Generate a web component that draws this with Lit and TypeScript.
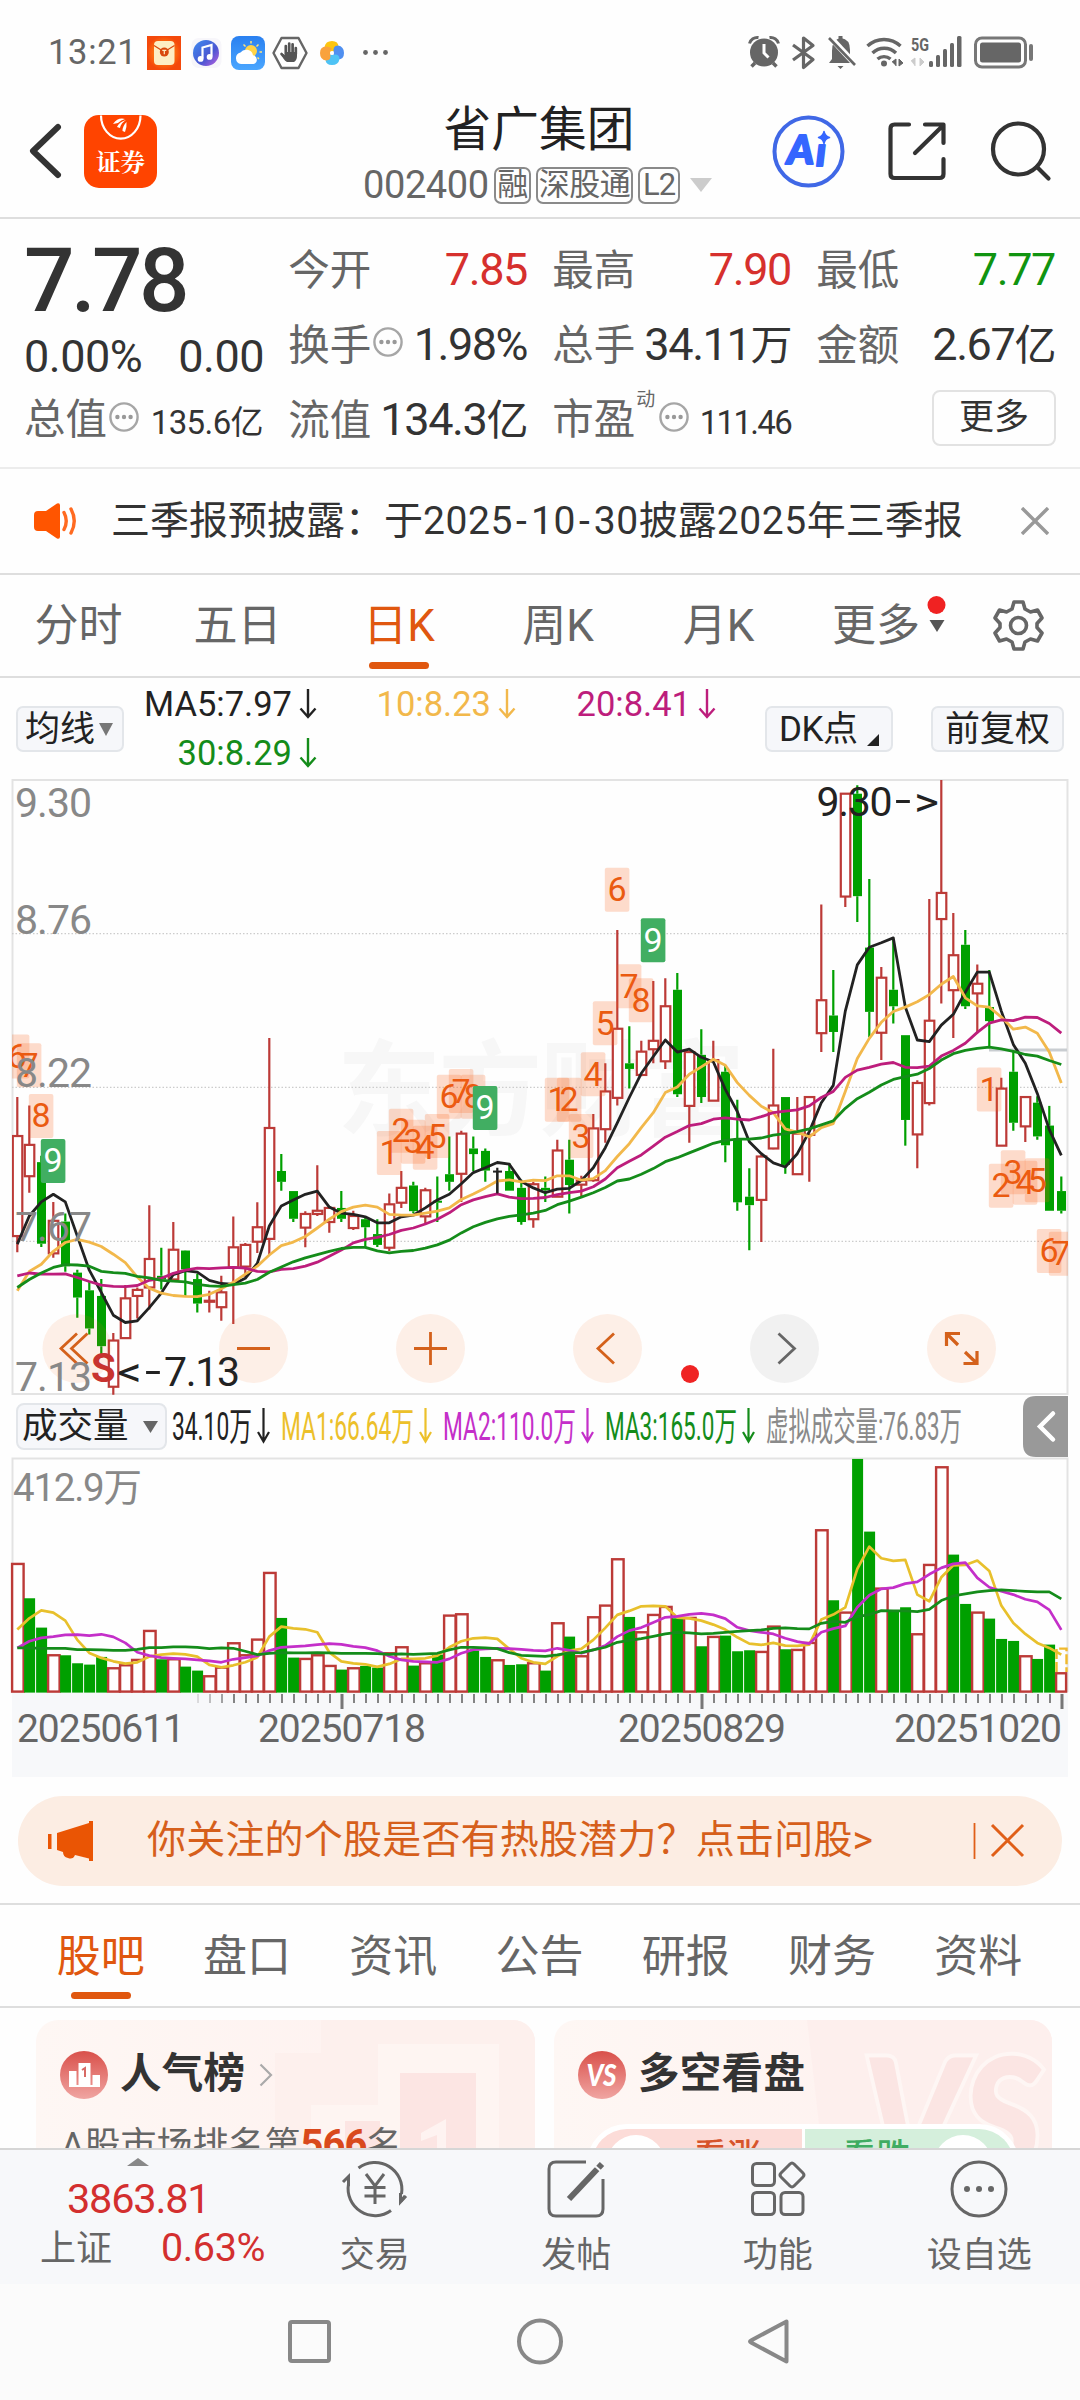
import { LitElement, html, svg, css } from "lit";
import { customElement } from "lit/decorators.js";

type Candle = [kind: string, high: number, low: number, top: number, bottom: number];

/* Horizontal layout shared by both chart panes. */
const STEP = 12;
const X0 = 17.3;
const cx = (i: number) => X0 + STEP * i;

/* Price pane: levels are recorded on a 1568-step scale over 630px. */
const PY = 630 / 1568;
const py = (v: number) => v * PY;

/* Volume pane: three steps per pixel, offset by the legend row. */
const vy = (v: number) => v / 3 - 66.4;

const CANDLES: Candle[] = [
  ["r", 814, 1200, 911, 1160], ["r", 835, 1052, 933, 1011], ["g", 960, 1187, 976, 1179], ["r", 1075, 1214, 1122, 1203],
  ["g", 1104, 1249, 1124, 1235], ["g", 1244, 1363, 1251, 1313], ["g", 1273, 1405, 1295, 1390], ["g", 1267, 1463, 1309, 1434],
  ["r", 1401, 1555, 1420, 1535], ["r", 1282, 1415, 1315, 1414], ["r", 1288, 1365, 1294, 1309], ["r", 1083, 1343, 1217, 1288],
  ["g", 1189, 1293, 1259, 1268], ["r", 1125, 1270, 1194, 1268], ["g", 1195, 1310, 1196, 1243], ["g", 1254, 1350, 1267, 1328],
  ["r", 1296, 1350, 1321, 1323], ["r", 1259, 1371, 1300, 1337], ["r", 1111, 1379, 1188, 1238], ["r", 1177, 1262, 1182, 1236],
  ["r", 1076, 1202, 1138, 1174], ["r", 667, 1208, 891, 1167], ["g", 956, 1047, 998, 1025], ["g", 1048, 1125, 1048, 1117],
  ["r", 1098, 1188, 1105, 1139], ["r", 984, 1110, 1097, 1105], ["r", 1085, 1152, 1090, 1125], ["g", 1048, 1125, 1090, 1117],
  ["r", 1097, 1145, 1110, 1140], ["g", 1115, 1187, 1118, 1138], ["g", 1118, 1187, 1155, 1182], ["r", 1054, 1197, 1081, 1189],
  ["r", 998, 1090, 1040, 1077], ["g", 1025, 1103, 1034, 1098], ["r", 1040, 1130, 1046, 1111], ["g", 1012, 1125, 1072, 1077],
  ["g", 912, 1047, 1006, 1025], ["r", 898, 1075, 905, 1005], ["g", 912, 998, 942, 956], ["g", 942, 1025, 948, 997],
  ["k", 990, 1054, 997, 999], ["g", 978, 1047, 998, 1047], ["g", 1020, 1132, 1040, 1125], ["r", 1025, 1139, 1031, 1118],
  ["g", 1012, 1075, 1040, 1046], ["r", 920, 1063, 947, 1062], ["g", 920, 1104, 970, 1033], ["r", 1010, 1060, 1022, 1032],
  ["r", 856, 1025, 892, 1021], ["r", 730, 928, 800, 894], ["r", 398, 835, 644, 816], ["g", 638, 793, 730, 744],
  ["r", 674, 762, 701, 759], ["r", 525, 730, 674, 695], ["r", 518, 744, 588, 725], ["g", 505, 814, 547, 807],
  ["r", 700, 928, 702, 836], ["g", 645, 829, 709, 814], ["r", 674, 824, 722, 823], ["g", 735, 976, 751, 934],
  ["g", 821, 1097, 920, 1076], ["g", 991, 1195, 1062, 1083], ["r", 958, 1175, 962, 1070], ["r", 694, 944, 835, 942],
  ["g", 814, 1005, 814, 983], ["r", 814, 1008, 905, 1006], ["r", 812, 1025, 814, 908], ["r", 335, 702, 573, 655],
  ["g", 498, 702, 611, 652], ["r", 57, 341, 59, 315], ["g", 38, 378, 59, 314], ["g", 271, 665, 442, 602],
  ["r", 490, 722, 517, 654], ["g", 420, 631, 547, 588], ["g", 660, 935, 660, 871], ["r", 772, 991, 779, 907],
  ["r", 321, 835, 624, 829], ["r", 25, 581, 306, 371], ["r", 356, 667, 461, 548], ["g", 398, 595, 435, 588],
  ["r", 484, 655, 532, 556], ["g", 498, 690, 590, 625], ["r", 766, 936, 793, 935], ["g", 700, 898, 751, 878],
  ["r", 812, 926, 814, 887], ["g", 812, 920, 828, 912], ["g", 836, 1097, 885, 1097], ["g", 1012, 1104, 1048, 1097],
];

const PRICE_LINES: { color: string; values: number[] }[] = [
  { color: "#222", values: [1180, 1110, 1075, 1056, 1075, 1160, 1245, 1300, 1357, 1375, 1371, 1338, 1302, 1256, 1246, 1250, 1270, 1278, 1280, 1265, 1228, 1135, 1085, 1070, 1056, 1048, 1088, 1103, 1106, 1112, 1127, 1127, 1112, 1108, 1090, 1070, 1056, 1030, 1002, 990, 977, 981, 1024, 1040, 1052, 1043, 1041, 1022, 990, 940, 878, 815, 755, 713, 672, 702, 695, 715, 726, 795, 850, 925, 955, 978, 988, 955, 900, 828, 785, 600, 485, 441, 430, 418, 590, 672, 676, 635, 608, 553, 503, 503, 600, 683, 730, 805, 895, 959] },
  { color: "#f2b84b", values: [1296, 1248, 1230, 1198, 1176, 1168, 1175, 1186, 1205, 1226, 1262, 1290, 1302, 1308, 1310, 1311, 1305, 1291, 1275, 1255, 1235, 1207, 1184, 1175, 1161, 1140, 1118, 1099, 1088, 1083, 1088, 1106, 1108, 1108, 1103, 1098, 1090, 1069, 1055, 1040, 1023, 1020, 1025, 1021, 1022, 1010, 1010, 1021, 1017, 997, 962, 930, 890, 853, 803, 789, 757, 739, 720, 735, 778, 810, 837, 853, 893, 902, 913, 890, 880, 800, 718, 668, 628, 601, 590, 577, 559, 533, 514, 567, 587, 590, 615, 645, 640, 655, 702, 779] },
  { color: "#bd1d7c", values: [1259, 1252, 1255, 1255, 1254, 1263, 1273, 1282, 1285, 1286, 1283, 1270, 1265, 1253, 1245, 1240, 1241, 1239, 1238, 1240, 1248, 1249, 1243, 1241, 1235, 1225, 1210, 1195, 1177, 1168, 1163, 1156, 1146, 1140, 1130, 1118, 1102, 1082, 1070, 1062, 1055, 1063, 1067, 1066, 1064, 1057, 1052, 1048, 1037, 1018, 990, 974, 958, 936, 914, 900, 885, 880, 869, 866, 869, 871, 863, 853, 849, 846, 836, 815, 800, 765, 747, 740, 732, 728, 740, 741, 737, 712, 698, 680, 653, 630, 622, 624, 615, 616, 631, 655] },
  { color: "#148c1a", values: [1288, 1268, 1252, 1238, 1231, 1232, 1235, 1248, 1251, 1253, 1260, 1264, 1270, 1272, 1274, 1280, 1284, 1285, 1281, 1277, 1268, 1250, 1237, 1224, 1214, 1206, 1198, 1191, 1188, 1188, 1197, 1202, 1198, 1196, 1190, 1182, 1170, 1152, 1137, 1126, 1117, 1111, 1107, 1103, 1096, 1082, 1073, 1063, 1052, 1039, 1023, 1018, 1006, 992, 975, 965, 953, 941, 929, 922, 919, 919, 916, 909, 905, 900, 893, 883, 873, 842, 818, 802, 784, 770, 763, 757, 743, 722, 706, 698, 693, 690, 694, 700, 708, 712, 723, 733] },
];

const SEQUENCE: [index: number, level: number, digit: number][] = [
  [0, 713, 6], [1, 735, 7], [2, 861, 8], [3, 973, 9],
  [31, 953, 1], [32, 898, 2], [33, 925, 3], [34, 940, 4], [35, 911, 5], [36, 813, 6], [37, 799, 7], [38, 813, 8], [39, 841, 9],
  [45, 821, 1], [46, 821, 2], [47, 911, 3], [48, 757, 4], [49, 630, 5], [50, 298, 6], [51, 538, 7], [52, 573, 8], [53, 424, 9],
  [81, 795, 1], [82, 1035, 2], [83, 1001, 3], [84, 1027, 4], [85, 1021, 5], [86, 1197, 6], [87, 1204, 7],
];

const VOLUMES: [kind: string, top: number][] = [
  ["r", 520], ["g", 623], ["g", 711], ["r", 794], ["g", 794], ["g", 818], ["g", 822], ["g", 799], ["r", 833], ["r", 824], ["r", 808],
  ["r", 721], ["g", 806], ["r", 806], ["g", 828], ["g", 840], ["r", 857], ["r", 831], ["r", 758], ["r", 794], ["r", 747], ["r", 547],
  ["g", 682], ["g", 801], ["r", 805], ["r", 794], ["r", 826], ["g", 837], ["r", 833], ["g", 826], ["g", 831], ["r", 788], ["r", 770],
  ["g", 825], ["r", 818], ["g", 792], ["r", 675], ["r", 671], ["g", 780], ["g", 799], ["r", 809], ["g", 823], ["g", 821], ["r", 818],
  ["g", 840], ["r", 698], ["g", 738], ["r", 797], ["r", 680], ["r", 645], ["r", 506], ["g", 679], ["r", 725], ["r", 673], ["r", 649],
  ["g", 683], ["r", 682], ["g", 767], ["r", 739], ["g", 735], ["g", 782], ["g", 779], ["r", 784], ["r", 708], ["g", 776], ["r", 778],
  ["r", 757], ["r", 419], ["g", 629], ["r", 666], ["g", 205], ["g", 423], ["r", 594], ["g", 664], ["g", 650], ["r", 731], ["r", 523],
  ["r", 230], ["g", 492], ["g", 640], ["r", 666], ["g", 684], ["g", 745], ["g", 751], ["r", 797], ["g", 805], ["g", 762], ["r", 848],
];

const VOLUME_LINES: { color: string; values: number[] }[] = [
  { color: "#e8c02c", values: [717, 683, 659, 666, 690, 748, 787, 802, 812, 819, 815, 798, 792, 789, 791, 798, 823, 830, 824, 815, 800, 738, 708, 713, 716, 725, 785, 812, 818, 821, 829, 820, 805, 805, 803, 795, 770, 752, 743, 741, 745, 775, 803, 815, 820, 797, 780, 775, 748, 712, 673, 661, 647, 646, 647, 681, 683, 690, 702, 717, 740, 759, 763, 757, 765, 766, 762, 687, 672, 650, 535, 468, 503, 511, 508, 612, 632, 560, 524, 523, 510, 541, 645, 697, 730, 757, 772, 792] },
  { color: "#c42fc9", values: [772, 752, 742, 738, 733, 732, 735, 731, 739, 757, 785, 795, 801, 803, 805, 808, 811, 815, 806, 801, 796, 780, 770, 768, 766, 762, 759, 761, 767, 771, 780, 797, 808, 812, 814, 815, 805, 788, 777, 775, 773, 774, 776, 779, 781, 773, 779, 788, 778, 765, 738, 720, 711, 696, 680, 677, 671, 668, 673, 684, 710, 720, 725, 730, 743, 753, 759, 725, 714, 706, 650, 614, 595, 591, 579, 574, 551, 532, 520, 516, 562, 590, 602, 612, 626, 634, 658, 718] },
  { color: "#148c1a", values: [772, 772, 773, 773, 773, 777, 777, 778, 779, 779, 776, 771, 771, 769, 769, 770, 774, 772, 773, 782, 792, 788, 786, 787, 787, 786, 787, 788, 788, 788, 789, 791, 790, 791, 790, 788, 778, 770, 770, 772, 774, 786, 794, 796, 797, 793, 787, 786, 778, 770, 755, 749, 744, 737, 730, 725, 727, 730, 728, 725, 722, 720, 718, 713, 712, 714, 715, 698, 692, 695, 678, 672, 660, 661, 661, 663, 656, 630, 616, 610, 604, 600, 598, 600, 602, 604, 604, 625] },
];

const polyline = (values: number[], y: (v: number) => number) =>
  values.map((v, i) => `${cx(i).toFixed(1)},${y(v).toFixed(1)}`).join(" ");

const downArrow = html`<svg class="arrow" width="18" height="30" viewBox="0 0 18 30" fill="none" stroke="currentColor" stroke-width="2.4"><path d="M9 0v28M1.500 19.500L9 28l7.500-8.500" /></svg>`;

const infoIcon = html`<svg class="info" width="32" height="32" viewBox="0 0 32 32"><circle cx="16" cy="16" r="13.6" fill="none" stroke="#a6a6a6" stroke-width="2.4" /><g fill="#999"><circle cx="9.400" cy="16" r="2.200" /><circle cx="16" cy="16" r="2.200" /><circle cx="22.600" cy="16" r="2.200" /></g></svg>`;

const shared = css`
  :host {
    display: block;
    font-family: Roboto, "Noto Sans CJK SC", sans-serif;
    color: #333;
  }
  * { box-sizing: border-box; }
  svg { display: block; flex: none; }
  text { font-family: Roboto, "Noto Sans CJK SC", sans-serif; }
`;

@customElement("status-bar")
class StatusBar extends LitElement {
  static styles = [shared, css`
    .bar { height: 104px; padding: 0 0 0 48px; display: flex; align-items: flex-start; }
    .time { width: 99px; padding-top: 32px; font-size: 34.500px; line-height: 40px; letter-spacing: 0.700px; color: #666; }
    .left { margin-top: 30px; }
    .right { margin: 30px 40px 0 auto; }
    .net { font-weight: 700; font-size: 19px; }
  `];
  render() {
    const petal = "M332 51q-7.500 2-7.500-4q1-6 7.500-6q6.500 0 6.500 6q0 3-2 6q-1-2-4.500-2z";
    return html`<div class="bar">
      <div class="time">13:21</div>
      <svg class="left" width="250" height="46" viewBox="147 30 250 46">
        <defs>
          <radialGradient id="env"><stop offset=".5" stop-color="#ff7a12" /><stop offset="1" stop-color="#f4490b" /></radialGradient>
          <linearGradient id="mus" x1="0" y1="0" x2="1" y2="1"><stop stop-color="#3e8df0" /><stop offset=".6" stop-color="#4a56d2" /><stop offset="1" stop-color="#c060e0" /></linearGradient>
          <linearGradient id="sky" x1="0" y1="0" x2="0" y2="1"><stop stop-color="#2a80f0" /><stop offset="1" stop-color="#4aa6ff" /></linearGradient>
        </defs>
        <rect x="147" y="36" width="34" height="34" fill="url(#env)" />
        <rect x="154" y="41" width="20.500" height="24" rx="4" fill="#fdeec4" />
        <path d="M154 45.500q4 2.500 10.300 6.500q6-4 10.200-6.500" fill="none" stroke="#d9480c" stroke-width="1.200" />
        <circle cx="164.300" cy="52" r="4.500" fill="#d9480c" />
        <path d="M162.300 50.300h4M164.300 50.300v4" stroke="#fdeec4" stroke-width="1.200" />
        <rect x="191.500" y="38" width="30" height="30" rx="7" fill="#f7f6fa" />
        <circle cx="206" cy="53" r="13" fill="url(#mus)" />
        <path d="M202.500 58.500V47.500l9-2.500v11.500" fill="none" stroke="#fff" stroke-width="2.200" />
        <circle cx="200.600" cy="58.900" r="2.900" fill="#fff" /><circle cx="209.600" cy="56.900" r="2.900" fill="#fff" />
        <rect x="231" y="36" width="34" height="34" rx="8" fill="url(#sky)" />
        <path d="M251 41v2.500M243.500 44.500l2 2M258.500 44.500l-2 2M262 52h-2.500M259 59l-1.500-1.500" stroke="#ffe27a" stroke-width="1.500" />
        <circle cx="251" cy="51" r="6" fill="#ffd447" />
        <path d="M241 64a5.800 5.800 0 01-.5-11.400a7 7 0 0112.500 2.600a4.500 4.500 0 01.5 8.800z" fill="#fff" />
        <path d="M281.500 38h17l8 15l-8 15h-17l-8-15z" fill="#fff" stroke="#666" stroke-width="2.400" stroke-linejoin="round" />
        <g fill="none" stroke="#555" stroke-width="2.700" stroke-linecap="round"><path d="M285.800 54v-8M289.200 53v-9.500M292.600 53v-8.700M295.800 54v-6M281.500 54l2.500 3" /></g>
        <path d="M281.500 53l3.500 2v-3h12v4q0 4-3 6h-7q-4-2-5.500-9z" fill="#555" />
        <path d=${petal} fill="#fdc510" />
        <path d=${petal} fill="#4f8ff0" transform="rotate(90 332 53)" />
        <path d=${petal} fill="#4ec3f5" transform="rotate(180 332 53)" />
        <path d=${petal} fill="#f9a23c" transform="rotate(270 332 53)" />
        <g fill="#666"><circle cx="365.500" cy="52.500" r="2.400" /><circle cx="375.500" cy="52.500" r="2.400" /><circle cx="385.500" cy="52.500" r="2.400" /></g>
      </svg>
      <svg class="right" width="300" height="46" viewBox="740 30 300 46">
        <g fill="#666">
          <circle cx="764" cy="52.500" r="14" />
          <path d="M749.500 43.500a8 8 0 019-6M778.500 43.500a8 8 0 00-9-6" fill="none" stroke="#666" stroke-width="3" />
          <path d="M755 63l-3.500 3.500M773 63l3.500 3.500" stroke="#666" stroke-width="3.500" />
          <path d="M764 44v9l4.500 4.500" fill="none" stroke="#fff" stroke-width="3" />
        </g>
        <path d="M793 45l20 14.500l-9.500 8V38l9.500 7.500L793 60" fill="none" stroke="#666" stroke-width="3.200" stroke-linejoin="round" />
        <path d="M829 63l3-4V51q0-12 9-13q9 1 9 12v8l4 5z" fill="#666" />
        <path d="M837.500 66h6l-3 3zM838.500 36h4v3h-4z" fill="#666" />
        <path d="M829 36l26 28" stroke="#fff" stroke-width="6" /><path d="M829 38l26 27" stroke="#666" stroke-width="2.600" />
        <g fill="none" stroke="#666" stroke-width="3.400"><path d="M867.500 46a24 24 0 0133 0M872.500 53a17 17 0 0123.500 0M877.500 59a10 10 0 0113 0" /></g>
        <circle cx="884" cy="63.500" r="3" fill="#666" />
        <path d="M892 62l4-3v7M899 59v7l4-3z" fill="#666" stroke="#666" />
        <text class="net" x="911" y="50.500" fill="#666" textLength="18" lengthAdjust="spacingAndGlyphs">5G</text>
        <path d="M911 61l4-3v8M920 58v8l4-4z" fill="#ccc" stroke="#ccc" />
        <g fill="#666"><rect x="929" y="61" width="4" height="6" rx="1.500" /><rect x="936" y="55" width="4" height="12" rx="1.500" /><rect x="943" y="49" width="4" height="18" rx="1.500" /><rect x="950" y="43" width="4" height="24" rx="1.500" /><rect x="957" y="36" width="4.500" height="31" rx="1.500" /></g>
        <rect x="975.500" y="38" width="50" height="29" rx="6.500" fill="none" stroke="#777" stroke-width="3" />
        <rect x="980" y="42.500" width="41" height="20" rx="2.500" fill="#666" />
        <rect x="1029" y="44" width="4" height="17" rx="2" fill="#777" />
      </svg>
    </div>`;
  }
}

@customElement("stock-header")
class StockHeader extends LitElement {
  static styles = [shared, css`
    .bar { height: 115px; border-bottom: 2px solid #dedede; display: grid; grid-template-columns: 340px 400px 340px; }
    .title { text-align: center; font-size: 47.700px; line-height: 52px; color: #222; margin-left: -2px; }
    .code { display: flex; align-items: center; height: 38px; margin-top: 10px; padding-left: 23px; font-size: 38px; letter-spacing: -0.400px; color: #666; line-height: 38px; }
    .code .num { width: 131px; }
    .tag { height: 37px; border: 2px solid #8a8a8a; border-radius: 7px; font-size: 31px; line-height: 32px; letter-spacing: -0.5px; margin-right: 5px; white-space: nowrap; display: flex; justify-content: center; }
    .tag-1 { width: 37px; }
    .tag-3 { width: 97px; }
    .tag-2 { width: 42px; letter-spacing: -1px; }
    .drop { margin-left: 5px; }
    .brand { font-family: "Noto Serif CJK SC", "Noto Sans CJK SC", serif; font-weight: 700; font-size: 24px; }
    .ai { font-family: Lato, sans-serif; font-weight: 900; font-style: italic; font-size: 40px; }
  `];
  render() {
    return html`<div class="bar">
      <svg width="340" height="113" viewBox="0 104 340 113">
        <path d="M58 127L33 151l25 24" fill="none" stroke="#333" stroke-width="6" stroke-linecap="round" stroke-linejoin="round" />
        <rect x="84" y="115" width="73" height="73" rx="15" fill="#ff4400" />
        <path d="M101 115.500a19.600 23 0 0039.500 0" fill="none" stroke="#fff" stroke-width="2.200" />
        <path d="M125 119q-7-2-12 5l5-1q3-3 7-4zM126 120q-7 2-9 7l3 1q1-5 6-8zM126.500 122q-4 4-4 9l2.500 1q2-5 1.500-10z" fill="#fff" />
        <text class="brand" x="96" y="171" fill="#fff" textLength="49" lengthAdjust="spacingAndGlyphs">证券</text>
      </svg>
      <div>
        <div class="title">省广集团</div>
        <div class="code"><span class="num">002400</span><span class="tag tag-1">融</span><span class="tag tag-3">深股通</span><span class="tag tag-2">L2</span>
          <svg class="drop" width="22" height="14" viewBox="0 0 22 14"><path d="M0 0h22L11 14z" fill="#ccc" /></svg></div>
      </div>
      <svg width="340" height="113" viewBox="740 104 340 113" fill="none" stroke="#333" stroke-width="4.200" stroke-linecap="round" stroke-linejoin="round">
        <circle cx="808.500" cy="151.500" r="34" stroke="#4068e6" stroke-width="4" />
        <text class="ai" x="787" y="164" fill="#3566ff" stroke="#3566ff" stroke-width="2"><tspan textLength="27" lengthAdjust="spacingAndGlyphs">A</tspan><tspan x="816" y="165.500">ı</tspan></text>
        <path d="M824 131.500q1 5 5.500 6q-4.500 1-5.500 6q-1-5-5.500-6q4.500-1 5.500-6z" fill="#3566ff" stroke="#3566ff" stroke-width="1.500" />
        <path d="M909 124.500h-14.500q-4 0-4 4v45.500q0 4 4 4h45q4 0 4-4V159M925 124.500h18.500v18.500M943 125.500L915 153" />
        <circle cx="1018.500" cy="149" r="25.500" /><path d="M1037 167l11.500 11.500" />
      </svg>
    </div>`;
  }
}

@customElement("quote-panel")
class QuotePanel extends LitElement {
  static styles = [shared, css`
    .panel { height: 250px; padding: 12.500px 0 0 26px; display: grid; grid-template-columns: 236px 237px 237px 237px; grid-template-rows: repeat(3, 75.200px); column-gap: 27px; border-bottom: 2px solid #ececec; }
    .main { grid-row: 1 / 3; margin-left: -2px; padding-top: 1px; }
    .price { font-weight: 500; font-size: 89px; line-height: 96px; letter-spacing: -3.600px; color: #333; }
    .change { display: flex; justify-content: space-between; font-size: 45px; line-height: 60px; letter-spacing: -0.500px; margin: -2px -2px 0 0; }
    .cell { display: flex; align-items: baseline; line-height: 75px; white-space: nowrap; }
    .name { font-size: 41.500px; color: #666; margin-left: -0.800px; }
    .value { margin-left: auto; font-size: 45px; letter-spacing: -1.400px; margin-right: -1px; }
    .value .cjk { font-size: 42px; }
    .pct { letter-spacing: -1.500px; }
    .small { font-size: 33px; letter-spacing: -0.600px; }
    .small .cjk { font-size: 33px; }
    .ratio { letter-spacing: -1.700px; }
    .up { color: #d6302d; }
    .down { color: #109410; }
    .info { align-self: center; margin-left: 1px; margin-top: -4px; }
    .main ~ .cell:nth-of-type(8) .name { margin-left: -2px; }
    .sup { font-size: 19px; color: #666; align-self: flex-start; line-height: 24px; margin-top: 6px; width: 21px; margin-left: 1px; }
    .more { justify-self: end; margin-top: 8px; margin-right: -2px; width: 124px; height: 56px; border: 2px solid #e2e2e2; border-radius: 8px; font-size: 35px; line-height: 51px; text-align: center; color: #333; }
  `];
  render() {
    const cell = (name: string, value: string, unit = "", tone = "") =>
      html`<div class="cell"><span class="name">${name}</span><span class="value ${tone}">${value}<span class="cjk">${unit}</span></span></div>`;
    return html`<div class="panel">
      <div class="main"><div class="price">7.78</div><div class="change"><span>0.00%</span><span>0.00</span></div></div>
      ${cell("今开", "7.85", "", "up")} ${cell("最高", "7.90", "", "up")} ${cell("最低", "7.77", "", "down")}
      <div class="cell"><span class="name">换手</span>${infoIcon}<span class="value pct">1.98%</span></div>
      ${cell("总手", "34.11", "万")} ${cell("金额", "2.67", "亿")}
      <div class="cell"><span class="name">总值</span>${infoIcon}<span class="value small">135.6<span class="cjk">亿</span></span></div>
      ${cell("流值", "134.3", "亿")}
      <div class="cell"><span class="name">市盈</span><span class="sup">动</span>${infoIcon}<span class="value small ratio">111.46</span></div>
      <div class="more">更多</div>
    </div>`;
  }
}

@customElement("notice-bar")
class NoticeBar extends LitElement {
  static styles = [shared, css`
    .bar { height: 106px; padding: 0 31px 0 34px; display: flex; align-items: center; border-bottom: 2px solid #dedede; }
    .text { margin-left: 33px; font-size: 39px; letter-spacing: 0; line-height: 60px; white-space: nowrap; }
    .date { letter-spacing: 0.600px; }
    .dash { letter-spacing: 4px; padding-left: 3px; }
    .close { margin-left: auto; }
  `];
  render() {
    const dash = html`<span class="dash">-</span>`;
    return html`<div class="bar">
      <svg width="44" height="38" viewBox="0 0 44 38"><path d="M4 9h8L23 1.500q3-1 3 2v31q0 3-3 2L12 29H4q-4 0-4-4V13q0-4 4-4z" fill="#ff5500" /><path d="M30 10.500q4.500 8.500 0 17M37 7q6.500 12 0 24" fill="none" stroke="#ff6a20" stroke-width="3.400" stroke-linecap="round" /></svg>
      <span class="text">三季报预披露：于<span class="date">2025${dash}10${dash}30</span>披露<span class="date">2025</span>年三季报</span>
      <svg class="close" width="28" height="28" viewBox="0 0 28 28"><path d="M1 1l26 26M27 1L1 27" stroke="#999" stroke-width="3.400" /></svg>
    </div>`;
  }
}

@customElement("period-tabs")
class PeriodTabs extends LitElement {
  static styles = [shared, css`
    .bar { height: 103px; border-bottom: 2px solid #dedede; display: grid; grid-template-columns: 157px 161px 162px 156px 165px 278px; }
    .tab { display: flex; flex-direction: column; align-items: center; padding-top: 18px; font-size: 44px; line-height: 66px; color: #666; }
    .active { color: #e0570f; }
    .mark { width: 60px; height: 7px; border-radius: 4px; background: #e0570f; margin-top: 3px; }
    .more { display: flex; color: #666; }
    .more .label { width: 95px; padding: 18px 0 0 31px; font-size: 44px; line-height: 66px; white-space: nowrap; }
  `];
  render() {
    return html`<div class="bar">
      ${["分时", "五日", "日K", "周K", "月K"].map((t) => t === "日K"
        ? html`<div class="tab active">${t}<div class="mark"></div></div>`
        : html`<div class="tab">${t}</div>`)}
      <div class="more"><span class="label">更多</span>
        <svg width="160" height="101" viewBox="896 575 160 101">
          <circle cx="936.500" cy="605" r="9" fill="#f02222" /><path d="M929.500 620h15l-7.500 12z" fill="#555" />
          <path d="M1014 602h9l2 7l5.500 3l7-2l4.500 8l-5 5.500v4l5 5.500l-4.500 8l-7-2l-5.500 3l-2 7h-9l-2-7l-5.500-3l-7 2l-4.500-8l5-5.500v-4l-5-5.500l4.500-8l7 2l5.500-3z" fill="none" stroke="#666" stroke-width="3.600" stroke-linejoin="round" />
          <circle cx="1018.500" cy="625.500" r="8" fill="none" stroke="#666" stroke-width="3.600" />
        </svg>
      </div>
    </div>`;
  }
}

@customElement("average-legend")
class AverageLegend extends LitElement {
  static styles = [shared, css`
    .bar { height: 101px; padding: 0 16px 0 16px; display: flex; align-items: flex-start; }
    .chip { margin-top: 28px; height: 46px; border: 2px solid #e3e6ea; border-radius: 7px; background: #f6f7fa; color: #222; font-size: 35px; line-height: 41px; display: flex; align-items: center; white-space: nowrap; }
    .line { width: 108px; padding-left: 7px; gap: 4px; }
    .dk { width: 128px; padding-left: 12px; margin-left: auto; letter-spacing: -0.500px; }
    .dk svg { align-self: flex-end; margin: 0 0 4px 10px; }
    .right { width: 133px; margin-left: 38px; justify-content: center; }
    .values { display: grid; grid-template-columns: 193px 199px 200px; grid-template-rows: 48.500px 48.500px; padding-top: 2px; }
    .value { display: flex; justify-content: flex-end; align-items: center; gap: 7px; font-size: 34.500px; line-height: 48px; }
    .m5 { color: #222; }
    .m10 { color: #f2b84b; }
    .m20 { color: #bd1d7c; }
    .m30 { color: #148c1a; }
  `];
  render() {
    return html`<div class="bar">
      <div class="chip line">均线<svg width="14" height="13" viewBox="0 0 14 13"><path d="M0 0h14L7 13z" fill="#777" /></svg></div>
      <div class="values">
        <span class="value m5">MA5:7.97${downArrow}</span><span class="value m10">10:8.23${downArrow}</span><span class="value m20">20:8.41${downArrow}</span>
        <span class="value m30">30:8.29${downArrow}</span>
      </div>
      <div class="chip dk">DK点<svg width="12" height="12" viewBox="0 0 12 12"><path d="M12 0v12H0z" fill="#222" /></svg></div>
      <div class="chip right">前复权</div>
    </div>`;
  }
}

@customElement("price-chart")
class PriceChart extends LitElement {
  static styles = [shared, css`
    .axis { font-size: 41px; fill: #888; }
    .note { font-size: 41px; fill: #222; }
    .sell { font-size: 40px; font-weight: 700; fill: #c8332f; }
    .digit { font-size: 34px; text-anchor: middle; }
    .water { font-size: 104px; font-weight: 700; fill: #f7f7f7; }
  `];
  private candle([kind, high, low, top, bottom]: Candle, i: number) {
    const x = cx(i);
    const t = py(top), b = py(bottom);
    const color = kind === "r" ? "#bc3a37" : kind === "g" ? "#00a000" : "#222";
    const wicks = svg`<path d="M${x} ${py(high)}V${t}M${x} ${b}V${py(low)}" stroke=${color} stroke-width="2.200"/>`;
    return kind === "r"
      ? svg`${wicks}<rect x=${x - 4.5} y=${t} width="9.500" height=${Math.max(b - t, 1)} fill="#fff" stroke=${color} stroke-width="2.200"/>`
      : svg`${wicks}<rect x=${x - 4.3} y=${t} width="9" height=${Math.max(b - t, 2)} fill=${color}/>`;
  }
  private badge([i, level, digit]: [number, number, number]) {
    const x = cx(i) - 0.2, y = py(level), nine = digit === 9;
    return svg`<rect x=${x - 12.3} y=${y - 22} width="24.600" height="44" rx="2" fill=${nine ? "#41ae62" : "#fa5f16"} fill-opacity=${nine ? 1 : 0.22}/>
      <text class="digit" x=${x} y=${y + 11.5} fill=${nine ? "#fff" : "#ea5a10"}>${digit}</text>`;
  }
  render() {
    const centers = [77, 253.5, 430.5, 607.5, 784.5, 961.5];
    const labels: [string, number][] = [["9.30", 118], ["8.76", 407], ["8.22", 790], ["7.67", 1172], ["7.13", 1545]];
    return html`<svg width="1080" height="616" viewBox="0 9 1080 616">
      <defs><clipPath id="pane"><rect x="12" y="9" width="1056" height="616" /></clipPath></defs>
      <text class="water" x="337" y="358" textLength="408">东方财富</text>
      <rect x="12.500" y="10" width="1055" height="614" fill="none" stroke="#e3e3e3" stroke-width="2" />
      ${[407, 790, 1173].map((v) => svg`<path d="M12 ${py(v)}H1068" stroke="#ccc" stroke-width="1.200" stroke-dasharray="1.500 2"/>`)}
      <path d="M989 280H1067" stroke="#c9cdd1" stroke-width="3" />
      <g clip-path="url(#pane)">
        ${CANDLES.map((c, i) => this.candle(c, i))}
        ${PRICE_LINES.map((l) => svg`<polyline points=${polyline(l.values, py)} fill="none" stroke=${l.color} stroke-width="2.800" stroke-linejoin="round"/>`)}
        <path d="M${cx(40)} ${py(996)}V${py(1054)}" stroke="#222" stroke-width="2.200" />
        ${SEQUENCE.map((b) => this.badge(b))}
      </g>
      ${centers.map((x, i) => svg`<circle cx=${x} cy="578.500" r="34.500" fill=${i === 4 ? "#555" : "#f5681a"} fill-opacity=${i === 4 ? 0.08 : 0.1}/>`)}
      <g fill="none" stroke="#d4611b" stroke-width="2.800">
        <path d="M77 563.500L61 578.500l16 15M87.500 563.500L71.500 578.500l16 15" />
        <path d="M237 578.500h33" /><path d="M414 578.500h33M430.500 562v33" />
        <path d="M614 563.500L598 578.500l16 15" /><path d="M778.500 563.500l16 15l-16 15" stroke="#666" />
        <path d="M946.500 576V563.500H960M947 564l11 11M977 581v12.500h-13.500M976.500 593l-11.500-11" stroke-width="3.200" />
      </g>
      ${labels.map(([t, v]) => svg`<text class="axis" x="15" y=${py(v)} textLength="77">${t}</text>`)}
      <text class="note" x="816.500" y="45.500" textLength="76">9.30</text>
      <text class="note" x="895" y="44" textLength="16" lengthAdjust="spacingAndGlyphs">-</text>
      <text class="note" x="914" y="45.500" textLength="25" lengthAdjust="spacingAndGlyphs">&gt;</text>
      <text class="sell" x="91" y="612" textLength="23">S</text>
      <text class="note" x="117" y="615.500" textLength="25" lengthAdjust="spacingAndGlyphs">&lt;</text>
      <text class="note" x="145" y="614.500" textLength="16" lengthAdjust="spacingAndGlyphs">-</text>
      <text class="note" x="164" y="615.500" textLength="76">7.13</text>
      <circle cx="690" cy="604" r="9" fill="#ef2323" />
    </svg>`;
  }
}

@customElement("volume-legend")
class VolumeLegend extends LitElement {
  static styles = [shared, css`
    .bar { height: 62px; padding: 0 12px 0 16px; display: flex; align-items: flex-start; }
    .chip { margin-top: 8px; width: 151px; height: 47px; border: 2px solid #e3e6ea; border-radius: 8px; background: #f6f7fa; color: #222; font-size: 35.500px; line-height: 41px; display: flex; align-items: center; justify-content: space-between; padding: 0 7px 0 4px; }
    .items { display: flex; gap: 11px; padding-left: 5px; }
    .item { display: flex; align-items: flex-start; }
    .item .arrow { margin: 13px 0 0 5px; }
    .item text { font-size: 39px; fill: currentColor; }
    .fold { margin-left: auto; }
  `];
  render() {
    const items: [string, number, string][] = [["34.10万", 80, "#222"], ["MA1:66.64万", 133, "#ecc02a"], ["MA2:110.0万", 133, "#c42fc9"], ["MA3:165.0万", 132, "#148c1a"], ["虚拟成交量:76.83万", 196, "#8a8a8a"]];
    return html`<div class="bar">
      <div class="chip">成交量<svg width="15" height="12" viewBox="0 0 15 12"><path d="M0 0h15L7.500 12z" fill="#666" /></svg></div>
      <div class="items">${items.map(([text, width, color], i) => html`<div class="item" style="color:${color}">
        <svg width=${width} height="60" viewBox="0 0 ${width} 60"><text x="0" y="44.500" textLength=${width} lengthAdjust="spacingAndGlyphs">${text}</text></svg>
        ${i < 4 ? html`<svg class="arrow" width="13" height="36" viewBox="0 0 13 36" fill="none" stroke="currentColor" stroke-width="2.200"><path d="M6.500 0v33M1 24l5.500 9.500L12 24" /></svg>` : ""}</div>`)}</div>
      <svg class="fold" width="46" height="62" viewBox="0 0 46 62"><path d="M14 1H46V62H14Q1 62 1 49V14Q1 1 14 1z" fill="#999" /><path d="M31 18.500L18 31.500l13 13" fill="none" stroke="#fff" stroke-width="4.500" stroke-linecap="round" /></svg>
    </div>`;
  }
}

@customElement("volume-chart")
class VolumeChart extends LitElement {
  static styles = [shared, css`
    .scale { font-size: 38.500px; fill: #888; }
    .date { font-size: 39px; fill: #666; }
  `];
  render() {
    const base = vy(903);
    const tall = [27, 57, 87];
    const dates: [string, number][] = [["20250611", 17], ["20250718", 258], ["20250829", 618], ["20251020", 894]];
    return html`<svg width="1080" height="320" viewBox="0 0 1080 320">
      <rect x="12" y="235" width="1056" height="85" fill="#f7f8fa" />
      <path d="M12.500 235V1.500H1067.500V235" fill="none" stroke="#e3e3e3" stroke-width="2" />
      ${VOLUMES.map(([kind, top], i) => {
        const x = cx(i), y = vy(top);
        return kind === "r"
          ? svg`<rect x=${x - 5.2} y=${y} width=${i === 87 ? 10 : 11.5} height=${base - y} fill="#fff" stroke="#bc3a37" stroke-width="2.400"/>`
          : svg`<rect x=${x - 5.2} y=${y} width="11" height=${base - y + 1} fill="#00a000"/>`;
      })}
      <path d="M1056.500 ${vy(844)}V${vy(774)}H1066.500V${vy(844)}" fill="none" stroke="#f0b92c" stroke-width="2.400" stroke-dasharray="10 3" />
      ${VOLUME_LINES.map((l) => svg`<polyline points=${polyline(l.values, vy)} fill="none" stroke=${l.color} stroke-width="2.700" stroke-linejoin="round"/>`)}
      ${Array.from({ length: 73 }, (_, k) => k + 15).map((i) => svg`<path d="M${i * 12 + 18} 237V${tall.includes(i) ? 252 : 246}" stroke="#777" stroke-opacity=${Math.min(1, (i - 14) / 4)} stroke-width=${tall.includes(i) ? 3 : 1.8}/>`)}
      <text class="scale" x="13" y="44" textLength="129">412.9万</text>
      ${dates.map(([d, x]) => svg`<text class="date" x=${x} y="285" textLength="168">${d}</text>`)}
    </svg>`;
  }
}

@customElement("ask-banner")
class AskBanner extends LitElement {
  static styles = [shared, css`
    .wrap { height: 128px; padding: 19px 18px 0; border-bottom: 2px solid #dedede; }
    .pill { height: 90px; border-radius: 45px; background: #fcede3; display: flex; align-items: center; padding: 0 37px 0 29px; }
    .text { margin-left: 54px; font-size: 39px; letter-spacing: 0.200px; line-height: 60px; margin-top: -3px; color: #d65f1b; white-space: nowrap; }
    .close { margin-left: auto; }
  `];
  render() {
    return html`<div class="wrap"><div class="pill">
      <svg width="46" height="40" viewBox="0 0 46 40" fill="#ea5504"><path d="M1 13h3.500v15H1zM10 12L42 2V0h4v40h-4v-2.500L28 34q-2 5-7 3q-5-1-5-6l-6-2z" /></svg>
      <span class="text">你关注的个股是否有热股潜力？点击问股&gt;</span>
      <svg class="close" width="52" height="38" viewBox="0 0 52 38" fill="none" stroke="#e05f18"><path d="M1.500 1v36" stroke-width="1.800" /><path d="M19 3l31 31M50 3L19 34" stroke-width="3" /></svg>
    </div></div>`;
  }
}

@customElement("section-tabs")
class SectionTabs extends LitElement {
  static styles = [shared, css`
    .bar { height: 104px; padding: 0 28px; display: grid; grid-template-columns: repeat(7, 1fr); border-bottom: 2px solid #dedede; margin-top: -1px; margin-bottom: 1px; }
    .tab { display: flex; flex-direction: column; align-items: center; padding-top: 21px; font-size: 44px; line-height: 64px; color: #666; margin-left: -1px; }
    .active { color: #e0570f; }
    .mark { width: 60px; height: 7px; border-radius: 4px; background: #e0570f; margin-top: 3px; }
  `];
  render() {
    return html`<div class="bar">${["股吧", "盘口", "资讯", "公告", "研报", "财务", "资料"].map((t, i) =>
      html`<div class="tab ${i ? "" : "active"}">${t}${i ? "" : html`<div class="mark"></div>`}</div>`)}</div>`;
  }
}

@customElement("insight-cards")
class InsightCards extends LitElement {
  static styles = [shared, css`
    .cards { height: 139px; overflow: hidden; padding: 11px 28px 0 36px; display: grid; grid-template-columns: 499px 498px; column-gap: 19px; }
    .card { position: relative; height: 260px; border-radius: 22px; background: linear-gradient(90deg, #fef7f4, #fef0ee); overflow: hidden; }
    .art { position: absolute; right: 0; top: 0; }
    .head { position: relative; display: flex; align-items: center; padding: 25px 0 0 24px; height: 84px; font-size: 41.500px; line-height: 60px; font-weight: 700; }
    .head .title { margin-left: 12px; margin-top: -1px; letter-spacing: 0.300px; }
    .head .go { margin-left: 14px; }
    .rank { position: relative; padding-left: 25px; margin-top: 16px; font-size: 36px; line-height: 50px; color: #666; white-space: nowrap; }
    .rank b { font-size: 40px; letter-spacing: -1px; color: #d9491c; }
    .vote { position: relative; margin: 20px 33px 0 33px; height: 80px; border: 5px solid #fff; border-radius: 42px; display: grid; grid-template-columns: 1fr 1fr; column-gap: 3px; background: #fff; overflow: hidden; font-size: 34px; font-weight: 500; line-height: 42px; }
    .bull { background: #fcdcd8; color: #d6542c; display: flex; padding: 6px 0 0 15px; }
    .bear { background: #d5efdc; color: #3fac62; display: flex; padding: 6px 0 0 38px; }
    .bull .dot { margin-right: 28px; }
    .bear .dot { margin-left: 23px; }
    .vs { font-family: Lato, sans-serif; font-weight: 900; font-style: italic; }
  `];
  render() {
    const dot = html`<svg class="dot" width="58" height="58" viewBox="0 0 58 58"><circle cx="29" cy="29" r="29" fill="#fff" /></svg>`;
    return html`<div class="cards">
      <div class="card">
        <svg class="art" width="260" height="130" viewBox="0 0 260 130"><path d="M0 33H46V0H260V130H0z" fill="#fdf0ed" /><path d="M36 130V85H103V24H224V130z" fill="#fef5f2" /><path d="M125 53h76v77h-76zM70 101h35v29H70z" fill="#fce5e3" /><path d="M162 130v-15l-16 6v-8l25-14v31z" fill="#fef3f1" /></svg>
        <div class="head"><svg width="48" height="48" viewBox="0 0 48 48"><defs><linearGradient id="a" x1="0" y1="0" x2="0" y2="1"><stop stop-color="#d9504a" /><stop offset="1" stop-color="#f0a5a2" /></linearGradient></defs><circle cx="24" cy="24" r="24" fill="url(#a)" /><path d="M9 20h7.500v14h2V12h12v22h2V24h7.500v12H9z" fill="#fff" /><path d="M22 19l3-2v9" fill="none" stroke="#d86a65" stroke-width="2" /></svg>
          <span class="title">人气榜</span><svg class="go" width="14" height="24" viewBox="0 0 14 24"><path d="M1.500 1.500L12 12L1.500 22.500" fill="none" stroke="#aaa" stroke-width="2.200" /></svg></div>
        <div class="rank">A股市场排名第<b>566</b>名</div>
      </div>
      <div class="card">
        <svg class="art" width="250" height="130" viewBox="0 0 250 130"><path d="M5 0H250V130H20z" fill="#fdefed" /><text class="vs" x="60" y="158" font-size="165" fill="#fbe5e3" stroke="#fef6f4" stroke-width="8" paint-order="stroke" textLength="180" lengthAdjust="spacingAndGlyphs">VS</text></svg>
        <div class="head"><svg width="48" height="48" viewBox="0 0 48 48"><defs><linearGradient id="b" x1="0" y1="0" x2="0" y2="1"><stop stop-color="#d9504a" /><stop offset="1" stop-color="#f0a5a2" /></linearGradient></defs><circle cx="24" cy="24" r="24" fill="url(#b)" /><text class="vs" x="8.500" y="35" font-size="30" fill="#fff" textLength="30" lengthAdjust="spacingAndGlyphs">VS</text></svg>
          <span class="title">多空看盘</span></div>
        <div class="vote"><div class="bull">${dot}<span>看涨</span></div><div class="bear"><span>看跌</span>${dot}</div></div>
      </div>
    </div>`;
  }
}

@customElement("action-bar")
class ActionBar extends LitElement {
  static styles = [shared, css`
    .bar { height: 136px; background: #f7f8fa; border-top: 2px solid #d6d6d6; display: grid; grid-template-columns: 274px repeat(4, 201.500px); }
    .index { padding: 8px 9px 0 40px; color: #d32f2f; }
    .tri { margin-left: 87px; }
    .points { padding-left: 27px; font-size: 41.500px; line-height: 50px; letter-spacing: -1.200px; margin-top: 8px; }
    .row { display: flex; justify-content: space-between; align-items: baseline; font-size: 39.500px; line-height: 50px; letter-spacing: -0.400px; margin-top: -1px; }
    .row .name { font-size: 36px; letter-spacing: 0; color: #666; }
    .item { display: flex; flex-direction: column; align-items: center; padding-top: 8px; font-size: 35px; line-height: 50px; color: #666; }
    .item svg { margin-bottom: 11px; }
  `];
  render() {
    const icons = [
      ["交易", svg`<path d="M14.500 10A27 27 0 0157.500 36M57 43l4-5M47 52.500A27 27 0 014.500 26"/><path d="M-1 24l5.500-5.500V28M62 38l-5.500 6V35"/><path d="M22 16l9 12l9-12M31 28v18M20.500 29.500h21M20.500 38h21"/>`],
      ["发帖", svg`<path d="M41 4H11q-7 0-7 7v40q0 7 7 7h40q7 0 7-7V21"/><path d="M57 6L24 41" stroke-width="6"/><path d="M50 8l8 7" stroke="#f7f8fa" stroke-width="2"/>`],
      ["功能", svg`<rect x="5.500" y="5.500" width="22" height="22" rx="4"/><rect x="5.500" y="34.500" width="22" height="22" rx="4"/><rect x="34" y="34.500" width="22" height="22" rx="4"/><path d="M43 6q2-2 4 0l9 9q2 2 0 4l-9 9q-2 2-4 0l-9-9q-2-2 0-4z"/>`],
      ["设自选", svg`<circle cx="31" cy="31" r="27"/><g fill="#666" stroke="none"><circle cx="19" cy="31" r="3"/><circle cx="31" cy="31" r="3"/><circle cx="43" cy="31" r="3"/></g>`],
    ] as const;
    return html`<div class="bar">
      <div class="index"><svg class="tri" width="22" height="8" viewBox="0 0 22 8"><path d="M11 0l11 8H0z" fill="#888" /></svg>
        <div class="points">3863.81</div><div class="row"><span class="name">上证</span><span>0.63%</span></div></div>
      ${icons.map(([label, shape]) => html`<div class="item"><svg width="62" height="62" viewBox="0 0 62 62" fill="none" stroke="#666" stroke-width="3" overflow="visible">${shape}</svg>${label}</div>`)}
    </div>`;
  }
}

@customElement("system-nav")
class SystemNav extends LitElement {
  static styles = [shared, css`
    .bar { height: 116px; background: #fbfbfb; display: flex; align-items: center; justify-content: center; gap: 182px; }
  `];
  render() {
    return html`<div class="bar">
      <svg width="48" height="50" viewBox="0 0 48 50"><rect x="4" y="5" width="39" height="39" rx="2" fill="none" stroke="#888" stroke-width="4" /></svg>
      <svg width="48" height="50" viewBox="0 0 48 50"><circle cx="24" cy="24.500" r="21" fill="none" stroke="#888" stroke-width="4" /></svg>
      <svg width="48" height="50" viewBox="0 0 48 50"><path d="M40.500 4.500v40L5 25.500q-2-1 0-2z" fill="none" stroke="#888" stroke-width="4" stroke-linejoin="round" /></svg>
    </div>`;
  }
}

@customElement("app-root")
class AppRoot extends LitElement {
  static styles = css`
    :host { display: block; width: 1080px; height: 2400px; background: #fefefe; overflow: hidden; }
  `;
  render() {
    return html`
      <status-bar></status-bar>
      <stock-header></stock-header>
      <quote-panel></quote-panel>
      <notice-bar></notice-bar>
      <period-tabs></period-tabs>
      <average-legend></average-legend>
      <price-chart></price-chart>
      <volume-legend></volume-legend>
      <volume-chart></volume-chart>
      <ask-banner></ask-banner>
      <section-tabs></section-tabs>
      <insight-cards></insight-cards>
      <action-bar></action-bar>
      <system-nav></system-nav>
    `;
  }
}
